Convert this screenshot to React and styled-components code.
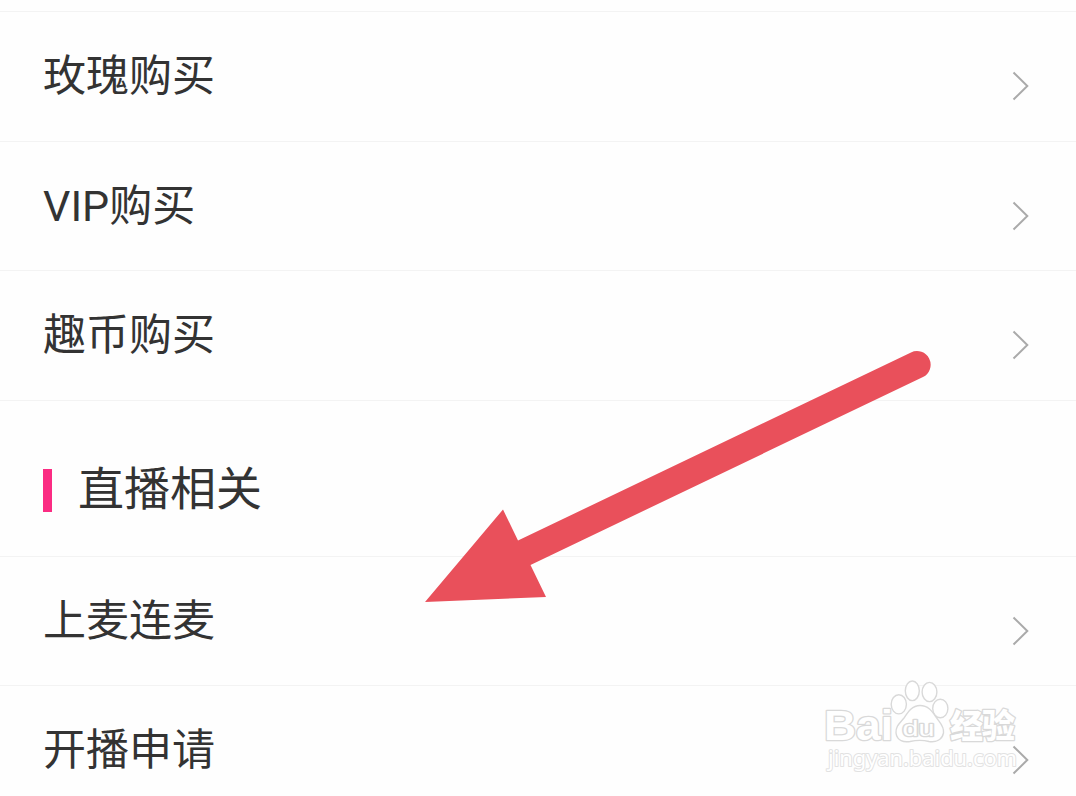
import React from 'react'
import styled, { createGlobalStyle } from "styled-components";

const purchases = [
  { name: '玫瑰购买', height: 130 },
  { name: 'VIP购买', height: 129 },
  { name: '趣币购买', height: 130 },
];

const lives = [
  { name: '上麦连麦', height: 129 },
  { name: '开播申请', height: 130 },
];

function MenuItem({ item }) {
  return (
    <Row $height={item.height}>
      <Label>{item.name}</Label>
      <Chevron viewBox="0 0 18 30">
        <path d="M1.5 1.5 L15.3 15 L1.5 28.5" />
      </Chevron>
    </Row>
  )
}

function Watermark() {
  return (
    <Mark viewBox="0 0 210 110">
      <g fill="#fff" stroke="#d9d9d9" strokeWidth="1.4">
        <ellipse cx="78.8" cy="24.3" rx="7.6" ry="9.6" />
        <ellipse cx="92.3" cy="10.8" rx="7" ry="9.8" />
        <ellipse cx="109.5" cy="12" rx="7.4" ry="9.6" />
        <ellipse cx="120.3" cy="28.5" rx="7.6" ry="9.3" />
        <path d="M100 25.5 C92 25.5 88 32 84 38 C80 43 75.5 46 76 53 C77 61 84 62.5 90 61.5 C97 60 103 60 109 61.5 C116 62.5 122 60 123.5 53 C124.5 46 119 42 116 37 C112 31 108 25.5 100 25.5 Z" />
      </g>
      <Brand x="4" y="60" textLength="69" lengthAdjust="spacingAndGlyphs" $size={43}>Bai</Brand>
      <Brand x="82.5" y="56" textLength="32" lengthAdjust="spacingAndGlyphs" $size={22} $weight={400}>du</Brand>
      <Brand x="130" y="58" textLength="65" $size={33} $weight={900} $cjk>经验</Brand>
      <Site x="8" y="86" textLength="189" lengthAdjust="spacingAndGlyphs">jingyan.baidu.com</Site>
    </Mark>
  )
}

function App() {
  return (
    <Screen>
      <GlobalStyle />
      {purchases.map((item) => <MenuItem key={item.name} item={item} />)}
      <Section>
        <Bar />
        <Title>直播相关</Title>
      </Section>
      {lives.map((item) => <MenuItem key={item.name} item={item} />)}

      <Arrow viewBox="0 0 520 260">
        <path d="M5 252 L83 159.5 L98 190.5 L491 2.5 A13.5 13.5 0 0 1 503 27 L110.5 215 L126 247 Z" />
      </Arrow>
      <Watermark />
    </Screen>
  )
}

export default App

const GlobalStyle = createGlobalStyle`
  body {
    margin: 0;
    background-color: #fefefe;
  }
`
const Screen = styled.div`
  position: relative;
  box-sizing: border-box;
  width: 1076px;
  height: 796px;
  padding-top: 11px;
  overflow: hidden;
  background-color: #fefefe;
  font-family: Roboto, "Noto Sans CJK SC", sans-serif;
  color: #333;
`
const Row = styled.div`
  display: flex;
  align-items: flex-start;
  justify-content: space-between;
  box-sizing: border-box;
  height: ${(props) => props.$height}px;
  padding: 0 46px 0 43px;
  border-top: 1px solid #f3f3f3;
`
const Label = styled.span`
  margin-top: 33px;
  font-size: 43px;
  line-height: 62px;
  white-space: nowrap;
`
const Chevron = styled.svg`
  width: 18px;
  height: 30px;
  margin-top: 59px;
  fill: none;
  stroke: #aaa;
  stroke-width: 2;
`
const Section = styled.div`
  display: flex;
  align-items: center;
  box-sizing: border-box;
  height: 156px;
  padding: 24px 43px 0;
  border-top: 1px solid #f3f3f3;
`
const Bar = styled.div`
  width: 9px;
  height: 43px;
  margin-right: 26px;
  background-color: #fb2c83;
`
const Title = styled.span`
  margin-bottom: 3px;
  font-size: 46px;
  line-height: 66px;
`
const Arrow = styled.svg`
  position: absolute;
  left: 420px;
  top: 350px;
  width: 520px;
  height: 260px;
  fill: #e9505b;
`
const Mark = styled.svg`
  position: absolute;
  left: 820px;
  top: 680px;
  width: 210px;
  height: 110px;
`
const Brand = styled.text`
  font-family: ${(props) => props.$cjk ? '"Noto Sans CJK SC"' : '"Liberation Sans"'}, sans-serif;
  font-size: ${(props) => props.$size}px;
  font-weight: ${(props) => props.$weight || 700};
  fill: #fff;
  stroke: #d9d9d9;
  stroke-width: 2.6px;
  stroke-linejoin: round;
  paint-order: stroke;
`
const Site = styled.text`
  font-family: "Noto Sans", sans-serif;
  font-size: 22px;
  fill: #fff;
  stroke: #e2e2e2;
  stroke-width: 2px;
  stroke-linejoin: round;
  paint-order: stroke;
`
